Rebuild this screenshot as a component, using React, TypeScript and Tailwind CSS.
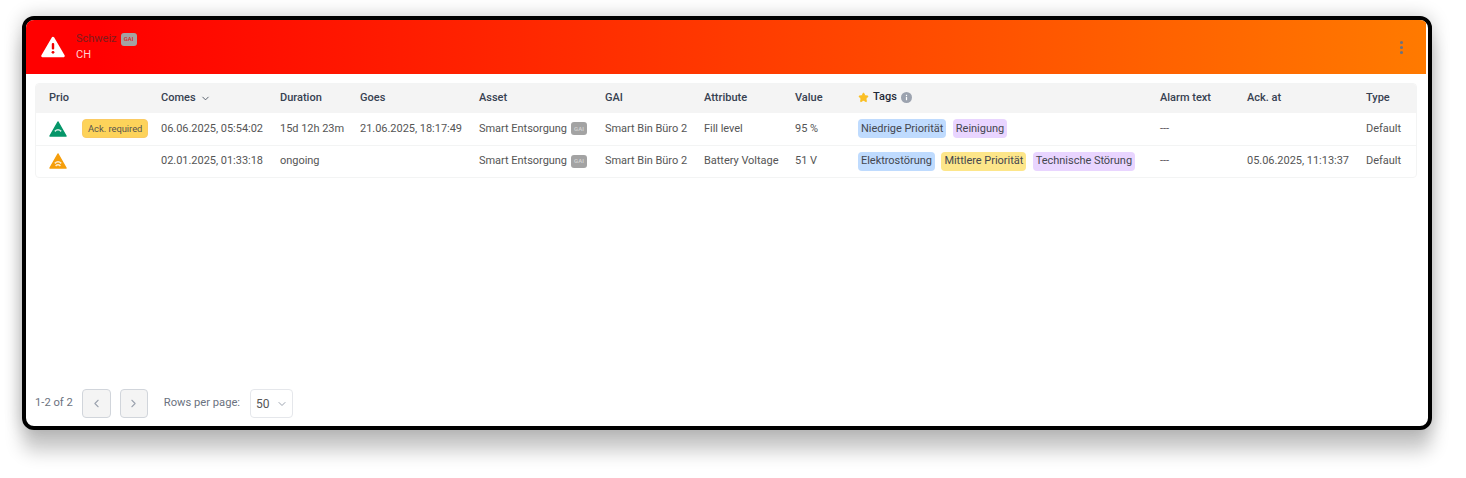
import React from 'react'
import { ChevronDown, ChevronLeft, ChevronRight, EllipsisVertical, Star } from 'lucide-react'

type Tag = { label: string; color: string }

const blue = 'bg-[#bfdbfe]'
const yellow = 'bg-[#fde68a]'
const purple = 'bg-[#e9d5ff]'

const rows = [
    {
        prio: 'low',
        ack: true,
        comes: '06.06.2025, 05:54:02',
        duration: '15d 12h 23m',
        goes: '21.06.2025, 18:17:49',
        attribute: 'Fill level',
        value: '95 %',
        tags: [
            { label: 'Niedrige Priorität', color: blue },
            { label: 'Reinigung', color: purple },
        ],
        ackAt: '',
    },
    {
        prio: 'mid',
        ack: false,
        comes: '02.01.2025, 01:33:18',
        duration: 'ongoing',
        goes: '',
        attribute: 'Battery Voltage',
        value: '51 V',
        tags: [
            { label: 'Elektrostörung', color: blue },
            { label: 'Mittlere Priorität', color: yellow },
            { label: 'Technische Störung', color: purple },
        ],
        ackAt: '05.06.2025, 11:13:37',
    },
]

const GaiBadge = ({ className }: { className: string }) => (
    <span
        className={`inline-flex h-[13px] w-[16px] items-center justify-center rounded-[3px] bg-[#a3a3a3] text-[6px] font-medium leading-none tracking-normal ${className}`}
    >
        GAI
    </span>
)

const PrioIcon = ({ prio }: { prio: string }) => (
    <svg width="18" height="16" viewBox="0 0 18 16">
        <path
            d="M9 1 L17 15 H1 Z"
            fill={prio === 'low' ? '#059669' : '#f59e0b'}
            stroke={prio === 'low' ? '#059669' : '#f59e0b'}
            strokeWidth="1.5"
            strokeLinejoin="round"
        />
        <path d="M5.8 10.4 Q9 7.2 12.2 10.4" fill="none" stroke="#fff" strokeWidth="1.5" opacity="0.8" />
        {prio === 'mid' && (
            <path d="M6.6 13 Q9 10.6 11.4 13" fill="none" stroke="#fff" strokeWidth="1.5" opacity="0.8" />
        )}
    </svg>
)

const InfoDot = () => (
    <svg width="11" height="11" viewBox="0 0 11 11">
        <circle cx="5.5" cy="5.5" r="5.5" fill="#9ca3af" />
        <rect x="4.9" y="4.8" width="1.2" height="3.4" fill="#fff" />
        <rect x="4.9" y="2.8" width="1.2" height="1.2" fill="#fff" />
    </svg>
)

const TagChip = ({ tag }: { tag: Tag }) => (
    <span className={`inline-flex h-[19px] items-center rounded-[4px] px-[3px] text-[11px] text-[#44474f] ${tag.color}`}>
        {tag.label}
    </span>
)

const Th = ({ className, children }: { className: string; children?: React.ReactNode }) => (
    <th className={`p-0 text-left text-[11px] font-medium text-[#374151] ${className}`}>{children}</th>
)

const Td = ({ children }: { children?: React.ReactNode }) => <td className="p-0">{children}</td>

export default function App() {
    return (
        <div className="h-[478px] w-[1466px] bg-white pl-[22px] pt-[16px] font-['Roboto',sans-serif]">
            <div className="flex h-[414px] w-[1410px] flex-col overflow-hidden rounded-[12px] border-4 border-black bg-white shadow-[0_22px_18px_rgba(0,0,0,0.2),0_0_18px_rgba(0,0,0,0.22)]">
                <div className="mr-[2px] flex h-[54px] shrink-0 items-center bg-[linear-gradient(to_right,#ff0000_5%,#ff7a00)] pl-[15px] pr-[16px]">
                    <svg width="24" height="22" viewBox="0 0 24 22" className="mt-[-1px]">
                        <path
                            d="M12 2 L22.5 20 H1.5 Z"
                            fill="#fff"
                            stroke="#fff"
                            strokeWidth="2.5"
                            strokeLinejoin="round"
                        />
                        <rect x="10.8" y="7" width="2.4" height="6.5" rx="1" fill="#f00000" />
                        <circle cx="12" cy="16.3" r="1.4" fill="#f00000" />
                    </svg>
                    <div className="ml-[11px] flex flex-col text-[11px] leading-[16px]">
                        <div className="flex items-center gap-[4px] text-[#7f1d1d]">
                            Schweiz
                            <GaiBadge className="text-[#dc2626]" />
                        </div>
                        <div className="text-[#ffd0d0]">CH</div>
                    </div>
                    <EllipsisVertical className="ml-auto text-[#6b7280]" size={17} strokeWidth={2.4} />
                </div>

                <div className="flex min-h-0 flex-1 flex-col pb-[8px] pl-[9px] pr-[11px] pt-[9px]">
                    <div className="overflow-hidden rounded-[4px] border border-[#f3f4f4]">
                        <table className="w-full table-fixed border-collapse">
                            <thead>
                                <tr className="h-[29px] bg-[#f4f4f4]">
                                    <Th className="w-[46px] pl-[13px]">Prio</Th>
                                    <Th className="w-[79px]" />
                                    <Th className="w-[119px]">
                                        <span className="flex items-center gap-[4px]">
                                            Comes <ChevronDown size={11} className="text-[#4b5563]" />
                                        </span>
                                    </Th>
                                    <Th className="w-[80px]">Duration</Th>
                                    <Th className="w-[119px]">Goes</Th>
                                    <Th className="w-[126px]">Asset</Th>
                                    <Th className="w-[99px]">GAI</Th>
                                    <Th className="w-[91px]">Attribute</Th>
                                    <Th className="w-[62px]">Value</Th>
                                    <Th className="w-[303px]">
                                        <span className="mt-[-2px] flex items-center gap-[4px] pl-[1px] text-[#1f2937]">
                                            <Star size={11} className="fill-[#fbbf24] text-[#fbbf24]" />
                                            Tags
                                            <InfoDot />
                                        </span>
                                    </Th>
                                    <Th className="w-[87px]">Alarm text</Th>
                                    <Th className="w-[119px]">Ack. at</Th>
                                    <Th className="">Type</Th>
                                </tr>
                            </thead>
                            <tbody className="text-[11px] tracking-[-0.03px] text-[#555555]">
                                {rows.map((r, i) => (
                                    <tr key={i} className="h-[32px] border-b border-[#f3f4f4] last:h-[32px] last:border-b-0">
                                        <td className="p-0 pl-[13px]">
                                            <span className="flex"><PrioIcon prio={r.prio} /></span>
                                        </td>
                                        <Td>
                                            {r.ack && (
                                                <span className="inline-flex h-[19px] items-center rounded-[4px] border border-[#fbcb63] bg-[#fdd35a] px-[5px] text-[9.4px] text-[#57534e]">
                                                    Ack. required
                                                </span>
                                            )}
                                        </Td>
                                        <Td>{r.comes}</Td>
                                        <Td>{r.duration}</Td>
                                        <Td>{r.goes}</Td>
                                        <Td>
                                            <span className="flex items-center gap-[4px]">
                                                Smart Entsorgung
                                                <GaiBadge className="text-[#d4d4d4]" />
                                            </span>
                                        </Td>
                                        <Td>Smart Bin Büro 2</Td>
                                        <Td>{r.attribute}</Td>
                                        <Td>{r.value}</Td>
                                        <Td>
                                            <span className="flex gap-[6.5px] pl-[1px]">
                                                {r.tags.map((t) => (
                                                    <TagChip key={t.label} tag={t} />
                                                ))}
                                            </span>
                                        </Td>
                                        <Td>---</Td>
                                        <Td>{r.ackAt}</Td>
                                        <Td>Default</Td>
                                    </tr>
                                ))}
                            </tbody>
                        </table>
                    </div>

                    <div className="mt-auto flex items-center text-[11.2px] text-[#6b7280]">
                        <span>1-2 of 2</span>
                        <button className="ml-[9px] flex h-[29px] w-[29px] items-center justify-center rounded-[4px] border border-[#d1d5db] bg-[#f4f4f4] text-[#9ca3af]">
                            <ChevronLeft size={13} />
                        </button>
                        <button className="ml-[9px] flex h-[29px] w-[28px] items-center justify-center rounded-[4px] border border-[#d1d5db] bg-[#f4f4f4] text-[#9ca3af]">
                            <ChevronRight size={13} />
                        </button>
                        <span className="ml-[16px]">Rows per page:</span>
                        <span className="ml-[10px] flex h-[29px] w-[43px] items-center gap-[6px] rounded-[4px] border border-[#e5e7eb] pl-[5px] text-[12px] text-[#555555]">
                            50 <ChevronDown size={12} className="text-[#9ca3af]" />
                        </span>
                    </div>
                </div>
            </div>
        </div>
    )
}
